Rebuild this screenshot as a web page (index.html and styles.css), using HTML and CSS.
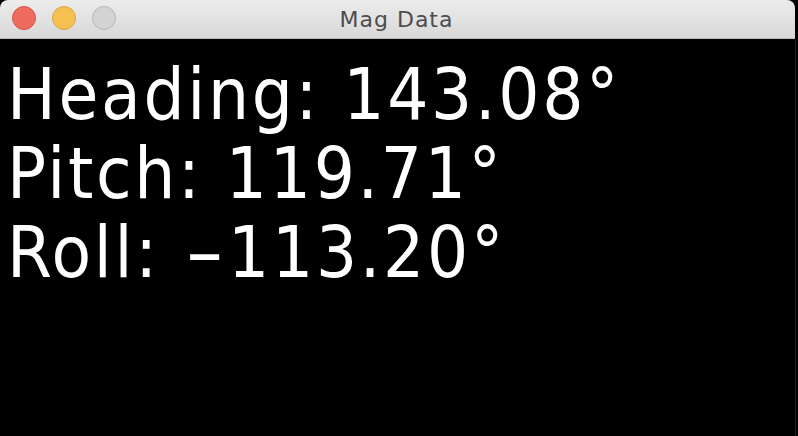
FILE: index.html
```html
<!DOCTYPE html>
<html>
<head>
<meta charset="utf-8">
<title>Mag Data</title>
<link rel="stylesheet" href="styles.css">
</head>
<body>
<div class="window">
  <div class="titlebar">
    <div class="lights">
      <span class="light close"></span>
      <span class="light min"></span>
      <span class="light max"></span>
    </div>
    <div class="title">Mag Data</div>
  </div>
  <div class="content">
    <div class="line">Heading: 143.08°</div>
    <div class="line">Pitch: 119.71°</div>
    <div class="line">Roll: <span class="dash">-</span>113.20°</div>
  </div>
</div>
</body>
</html>
```

FILE: styles.css
```css
html, body {
  margin: 0;
  padding: 0;
  background: #000;
  width: 798px;
  height: 436px;
  overflow: hidden;
}
.window {
  width: 798px;
  height: 436px;
  display: flex;
  flex-direction: column;
  background: #000;
}
.titlebar {
  position: relative;
  height: 38px;
  flex: 0 0 38px;
  margin-right: 3px;
  background: linear-gradient(#ececec, #d8d8d8);
  border-bottom: 1px solid #b9b9b9;
  border-top-right-radius: 8px;
  border-top-left-radius: 8px;
  display: flex;
  align-items: center;
  justify-content: center;
}
.lights {
  position: absolute;
  left: 12px;
  top: 6px;
  display: flex;
  gap: 16px;
}
.light {
  display: block;
  width: 22px;
  height: 22px;
  border-radius: 50%;
  border: 1px solid;
}
.close { background: #ed6b5f; border-color: #d5544a; }
.min { background: #f6c150; border-color: #d8a23e; }
.max { background: #d3d3d3; border-color: #b8b8b8; }
.title {
  font-family: "DejaVu Sans", sans-serif;
  font-size: 22px;
  letter-spacing: 1px;
  color: #4d4d4d;
  margin-left: -2px;
}
.content {
  flex: 1;
  border-right: 1px solid #262626;
  margin-right: 2px;
  padding: 16px 0 0 7px;
  color: #fff;
  font-family: "DejaVu Sans Condensed", "DejaVu Sans", sans-serif;
  font-stretch: condensed;
  font-size: 72px;
  line-height: 79px;
  letter-spacing: 2.7px;
}
.line {
  white-space: nowrap;
}
.dash {
  display: inline-block;
  transform: scaleX(1.7);
  margin: 0 8px 0 11px;
}
```
